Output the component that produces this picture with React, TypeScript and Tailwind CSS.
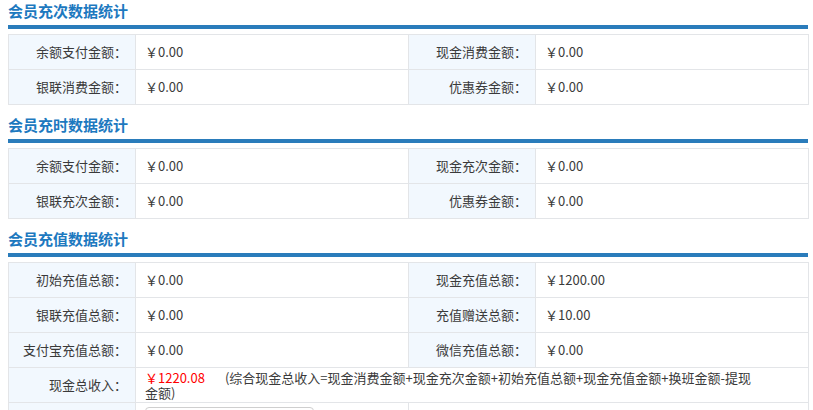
import React from 'react';

type Pair = [string, string];

const sections: { title: string; rows: [Pair, Pair][] }[] = [
    {
        title: '会员充次数据统计',
        rows: [
            [['余额支付金额：', '￥0.00'], ['现金消费金额：', '￥0.00']],
            [['银联消费金额：', '￥0.00'], ['优惠券金额：', '￥0.00']],
        ],
    },
    {
        title: '会员充时数据统计',
        rows: [
            [['余额支付金额：', '￥0.00'], ['现金充次金额：', '￥0.00']],
            [['银联充次金额：', '￥0.00'], ['优惠券金额：', '￥0.00']],
        ],
    },
    {
        title: '会员充值数据统计',
        rows: [
            [['初始充值总额：', '￥0.00'], ['现金充值总额：', '￥1200.00']],
            [['银联充值总额：', '￥0.00'], ['充值赠送总额：', '￥10.00']],
            [['支付宝充值总额：', '￥0.00'], ['微信充值总额：', '￥0.00']],
        ],
    },
];

const labelCls = 'border border-[#e3e5e8] bg-[#f2f8fe] text-right pr-[8px] align-middle';
const valueCls = 'border border-[#e3e5e8] bg-white text-left pl-[9px] align-middle';

const SectionHeader: React.FC<{ title: string }> = ({ title }) => (
    <div>
        <div className="h-[25px] pt-[3px] text-[15px] leading-[16px] font-bold text-[#1d79bf]">{title}</div>
        <div className="h-[4px] bg-[#2a7cbb]" />
    </div>
);

export default function App() {
    return (
        <div
            className="w-[813px] h-[410px] overflow-hidden bg-white text-[13px] text-[#3a3a3a]"
            style={{ fontFamily: '"Noto Sans CJK SC", "Noto Sans", sans-serif' }}
        >
            <div className="ml-2 w-[800px]">
                {sections.map((s, si) => (
                    <div key={s.title} className="mb-[9px]">
                        <SectionHeader title={s.title} />
                        <table className="mt-[5px] w-full table-fixed border-collapse">
                            <colgroup>
                                <col className="w-[127px]" />
                                <col className="w-[273px]" />
                                <col className="w-[127px]" />
                                <col className="w-[273px]" />
                            </colgroup>
                            <tbody>
                                {s.rows.map((r, ri) => (
                                    <tr key={ri} className="h-[35px]">
                                        <td className={labelCls}>{r[0][0]}</td>
                                        <td className={valueCls}>{r[0][1]}</td>
                                        <td className={labelCls}>{r[1][0]}</td>
                                        <td className={valueCls}>{r[1][1]}</td>
                                    </tr>
                                ))}
                                {si === 2 && (
                                    <>
                                        <tr className="h-[35px]">
                                            <td className={labelCls}>现金总收入：</td>
                                            <td colSpan={3} className={valueCls + ' leading-[15px] pr-1'}>
                                                <span className="text-[#f00]">￥1220.08</span>
                                                <span className="ml-[20px]">
                                                    (综合现金总收入=现金消费金额+现金充次金额+初始充值总额+现金充值金额+换班金额-提现
                                                    <br />
                                                    金额)
                                                </span>
                                            </td>
                                        </tr>
                                        <tr className="h-[35px]">
                                            <td className={labelCls}>&nbsp;</td>
                                            <td className={valueCls + ' align-top pt-[4px]'}>
                                                <input
                                                    type="text"
                                                    className="w-[169px] h-[26px] rounded-[4px] border border-[#cfcfcf] bg-white px-2 outline-none"
                                                />
                                            </td>
                                            <td colSpan={2} className="border border-[#e3e5e8] bg-white" />
                                        </tr>
                                    </>
                                )}
                            </tbody>
                        </table>
                    </div>
                ))}
            </div>
        </div>
    );
}
